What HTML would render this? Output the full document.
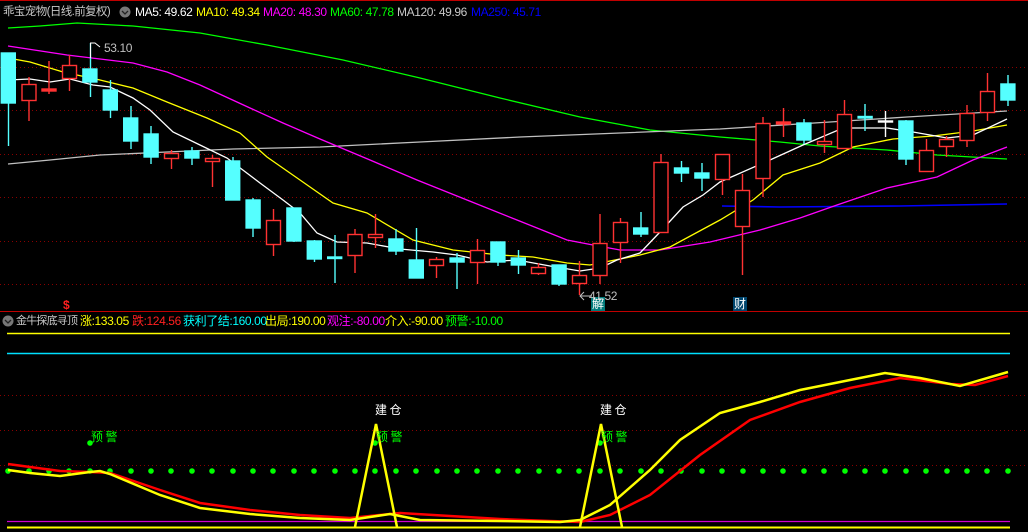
<!DOCTYPE html>
<html><head><meta charset="utf-8"><style>
html,body{margin:0;padding:0;background:#000;width:1028px;height:532px;overflow:hidden}
body{position:relative;font-family:"Liberation Sans","WenQuanYi Zen Hei",sans-serif;font-size:12px}
.t{position:absolute;white-space:nowrap;line-height:14px;letter-spacing:-0.4px}
svg{position:absolute;left:0;top:0}
</style></head><body>
<svg width="1028" height="532" viewBox="0 0 1028 532">
<g stroke="#8a0000" stroke-width="1" stroke-dasharray="1 3">
<line x1="0" x2="1028" y1="67.5" y2="67.5"/><line x1="0" x2="1028" y1="110.5" y2="110.5"/><line x1="0" x2="1028" y1="154.5" y2="154.5"/><line x1="0" x2="1028" y1="197.5" y2="197.5"/><line x1="0" x2="1028" y1="241.5" y2="241.5"/><line x1="0" x2="1028" y1="284.5" y2="284.5"/>
<line x1="0" x2="1028" y1="395.5" y2="395.5"/><line x1="0" x2="1028" y1="430.5" y2="430.5"/><line x1="0" x2="1028" y1="465.5" y2="465.5"/>
</g>
<line x1="0" x2="1028" y1="0.5" y2="0.5" stroke="#c00000"/>
<line x1="0" x2="1028" y1="311.5" y2="311.5" stroke="#c00000"/>
<g fill="none" stroke-width="1.3">
<polyline stroke="#00ff00" points="8,28 40,26 77,23 133,26 200,33 267,45 343,60 420,78 500,98 580,117 650,130 720,137 780,142 820,146 887,150 937,155 1007,159"/>
<polyline stroke="#c0c0c0" points="8,164 50,160 100,155 167,152 233,149 320,147 420,142 520,137 620,133 720,129 830,122 907,117 1007,111"/>
<polyline stroke="#0000ff" stroke-width="1.6" points="722,206 780,207 900,206 1007,204"/>
<polyline stroke="#ff00ff" points="8,46 67,55 133,63 167,72 200,85 250,108 283,123 320,139 370,160 417,180 467,200 517,220 567,240 593,245 620,250 660,250 710,242 760,230 800,218 837,205 887,188 937,177 973,160 1007,147"/>
<polyline stroke="#ffff00" points="8,58 30,62 63,72 100,80 133,88 167,102 207,118 240,133 267,157 300,180 333,203 367,213 413,240 453,250 500,255 533,257 567,263 590,265 640,255 670,247 720,220 753,200 783,175 820,163 853,147 893,139 933,136 973,131 1007,125"/>
<polyline stroke="#ffffff" points="8,80 30,79 50,82 70,79 93,85 110,87 133,98 150,110 173,132 200,145 227,158 260,183 283,200 300,213 317,233 337,242 367,243 400,249 433,252 457,255 487,262 517,260 550,266 580,271 600,268 617,260 640,253 660,232 683,207 703,195 720,182 770,160 803,145 843,128 887,128 913,132 947,138 973,135 1007,119"/>
</g>
<g stroke-width="1.4">
<g stroke="#55ffff" fill="#55ffff">
<line x1="8.5" x2="8.5" y1="53" y2="146"/><rect x="1.3" y="53" width="14" height="50"/>
<line x1="90.5" x2="90.5" y1="43" y2="97"/><rect x="82.9" y="69" width="14" height="13"/>
<line x1="110.5" x2="110.5" y1="80" y2="118"/><rect x="103.3" y="90" width="14" height="20"/>
<line x1="131" x2="131" y1="106" y2="149"/><rect x="123.7" y="118" width="14" height="23"/>
<line x1="151" x2="151" y1="126" y2="164"/><rect x="144.1" y="134" width="14" height="23"/>
<line x1="192" x2="192" y1="147" y2="165"/><rect x="184.9" y="151" width="14" height="7"/>
<line x1="233" x2="233" y1="157" y2="200"/><rect x="225.7" y="161" width="14" height="39"/>
<line x1="253" x2="253" y1="198" y2="237"/><rect x="246.1" y="200" width="14" height="28"/>
<line x1="294" x2="294" y1="208" y2="242"/><rect x="286.9" y="208" width="14" height="33"/>
<line x1="314.5" x2="314.5" y1="240" y2="262"/><rect x="307.3" y="241" width="14" height="18"/>
<line x1="335" x2="335" y1="235" y2="283"/><rect x="327.7" y="257" width="14" height="1.5"/>
<line x1="396" x2="396" y1="229" y2="255"/><rect x="388.9" y="239" width="14" height="12"/>
<line x1="416.5" x2="416.5" y1="228" y2="278"/><rect x="409.3" y="260" width="14" height="18"/>
<line x1="457" x2="457" y1="253" y2="289"/><rect x="450.1" y="258" width="14" height="4"/>
<line x1="498" x2="498" y1="242" y2="266"/><rect x="490.9" y="242" width="14" height="20"/>
<line x1="518.5" x2="518.5" y1="250" y2="274"/><rect x="511.3" y="258" width="14" height="7"/>
<line x1="559" x2="559" y1="265" y2="286"/><rect x="552.1" y="265" width="14" height="19"/>
<line x1="641" x2="641" y1="212" y2="237"/><rect x="633.7" y="228" width="14" height="6"/>
<line x1="681.5" x2="681.5" y1="161" y2="182"/><rect x="674.5" y="168" width="14" height="5"/>
<line x1="702" x2="702" y1="163" y2="191"/><rect x="694.9" y="173" width="14" height="5"/>
<line x1="804" x2="804" y1="119" y2="144"/><rect x="796.9" y="123" width="14" height="17"/>
<line x1="865" x2="865" y1="104" y2="131"/><rect x="858.1" y="116.5" width="14" height="1.5"/>
<line x1="906" x2="906" y1="120" y2="165"/><rect x="898.9" y="121" width="14" height="38"/>
<line x1="1008" x2="1008" y1="75" y2="106"/><rect x="1000.9" y="84" width="14" height="16"/>
</g>
<g stroke="#ffffff" fill="#ffffff"><line x1="885.5" x2="885.5" y1="111" y2="137"/><rect x="878.5" y="121" width="14" height="1"/></g>
<g stroke="#ff3232" fill="#000">
<line x1="29" x2="29" y1="77" y2="121"/><rect x="22" y="84.5" width="14" height="16"/>
<line x1="49" x2="49" y1="61" y2="94"/><rect x="42" y="89" width="14" height="2" fill="#ff3232"/>
<line x1="69.5" x2="69.5" y1="55" y2="91"/><rect x="62.5" y="65.5" width="14" height="13"/>
<line x1="171.5" x2="171.5" y1="150" y2="169"/><rect x="164.5" y="153.5" width="14" height="5"/>
<line x1="212.5" x2="212.5" y1="155" y2="187"/><rect x="205.5" y="158.5" width="14" height="3"/>
<line x1="273.5" x2="273.5" y1="209" y2="256"/><rect x="266.5" y="220.5" width="14" height="24"/>
<line x1="355" x2="355" y1="229" y2="273"/><rect x="348" y="234.5" width="14" height="21"/>
<line x1="375.5" x2="375.5" y1="214" y2="248"/><rect x="368.5" y="234.5" width="14" height="3"/>
<line x1="436.5" x2="436.5" y1="257" y2="278"/><rect x="429.5" y="259.5" width="14" height="6"/>
<line x1="477.5" x2="477.5" y1="239" y2="284"/><rect x="470.5" y="250.5" width="14" height="12"/>
<line x1="538.5" x2="538.5" y1="263" y2="275"/><rect x="531.5" y="267.5" width="14" height="6"/>
<line x1="579.5" x2="579.5" y1="261" y2="295"/><rect x="572.5" y="275.5" width="14" height="8"/>
<line x1="600" x2="600" y1="214" y2="284"/><rect x="593" y="243.5" width="14" height="32"/>
<line x1="620.5" x2="620.5" y1="218" y2="263"/><rect x="613.5" y="222.5" width="14" height="20"/>
<line x1="661" x2="661" y1="154" y2="233"/><rect x="654" y="162.5" width="14" height="70"/>
<line x1="722.5" x2="722.5" y1="154" y2="195"/><rect x="715.5" y="154.5" width="14" height="25"/>
<line x1="742.5" x2="742.5" y1="174" y2="275"/><rect x="735.5" y="190.5" width="14" height="36"/>
<line x1="763" x2="763" y1="117" y2="197"/><rect x="756" y="123.5" width="14" height="55"/>
<line x1="783.5" x2="783.5" y1="108" y2="137"/><rect x="776.5" y="122" width="14" height="2" fill="#ff3232"/>
<line x1="824.5" x2="824.5" y1="120" y2="153"/><rect x="817.5" y="141.5" width="14" height="3"/>
<line x1="844.5" x2="844.5" y1="100" y2="149"/><rect x="837.5" y="114.5" width="14" height="34"/>
<line x1="926.5" x2="926.5" y1="139" y2="172"/><rect x="919.5" y="150.5" width="14" height="21"/>
<line x1="946.5" x2="946.5" y1="136" y2="157"/><rect x="939.5" y="139.5" width="14" height="7"/>
<line x1="967" x2="967" y1="105" y2="147"/><rect x="960" y="113.5" width="14" height="27"/>
<line x1="987.5" x2="987.5" y1="73" y2="121"/><rect x="980.5" y="91.5" width="14" height="21"/>
</g>
</g>
<polyline fill="none" stroke="#fff" points="90.5,58 90.5,43 95,43 100,47"/>
<line x1="580" y1="296" x2="592" y2="296" stroke="#c0c0c0"/>
<polyline fill="none" stroke="#c0c0c0" points="584,292 580,296 584,300"/>
<rect x="591" y="297" width="14" height="14" fill="#007a7a"/>
<rect x="733" y="297" width="14" height="14" fill="#00466e"/>
<line x1="7" x2="1010" y1="333.5" y2="333.5" stroke="#ffff00" stroke-width="1.5"/>
<line x1="7" x2="1010" y1="353.5" y2="353.5" stroke="#00e0ff" stroke-width="1.5"/>
<line x1="7" x2="1010" y1="521.5" y2="521.5" stroke="#d000d0" stroke-width="1.2"/>
<line x1="7" x2="1010" y1="527.5" y2="527.5" stroke="#ffff00" stroke-width="2"/>
<g fill="#00ff00">
<circle cx="8" cy="471" r="2.8"/><circle cx="29" cy="471" r="2.8"/><circle cx="49" cy="471" r="2.8"/><circle cx="69" cy="471" r="2.8"/><circle cx="90" cy="471" r="2.8"/><circle cx="110" cy="471" r="2.8"/><circle cx="131" cy="471" r="2.8"/><circle cx="151" cy="471" r="2.8"/><circle cx="171" cy="471" r="2.8"/><circle cx="192" cy="471" r="2.8"/><circle cx="212" cy="471" r="2.8"/><circle cx="233" cy="471" r="2.8"/><circle cx="253" cy="471" r="2.8"/><circle cx="273" cy="471" r="2.8"/><circle cx="294" cy="471" r="2.8"/><circle cx="314" cy="471" r="2.8"/><circle cx="335" cy="471" r="2.8"/><circle cx="355" cy="471" r="2.8"/><circle cx="375" cy="471" r="2.8"/><circle cx="396" cy="471" r="2.8"/><circle cx="416" cy="471" r="2.8"/><circle cx="437" cy="471" r="2.8"/><circle cx="457" cy="471" r="2.8"/><circle cx="477" cy="471" r="2.8"/><circle cx="498" cy="471" r="2.8"/><circle cx="518" cy="471" r="2.8"/><circle cx="539" cy="471" r="2.8"/><circle cx="559" cy="471" r="2.8"/><circle cx="579" cy="471" r="2.8"/><circle cx="600" cy="471" r="2.8"/><circle cx="620" cy="471" r="2.8"/><circle cx="641" cy="471" r="2.8"/><circle cx="661" cy="471" r="2.8"/><circle cx="681" cy="471" r="2.8"/><circle cx="702" cy="471" r="2.8"/><circle cx="722" cy="471" r="2.8"/><circle cx="743" cy="471" r="2.8"/><circle cx="763" cy="471" r="2.8"/><circle cx="783" cy="471" r="2.8"/><circle cx="804" cy="471" r="2.8"/><circle cx="824" cy="471" r="2.8"/><circle cx="845" cy="471" r="2.8"/><circle cx="865" cy="471" r="2.8"/><circle cx="885" cy="471" r="2.8"/><circle cx="906" cy="471" r="2.8"/><circle cx="926" cy="471" r="2.8"/><circle cx="947" cy="471" r="2.8"/><circle cx="967" cy="471" r="2.8"/><circle cx="987" cy="471" r="2.8"/><circle cx="1008" cy="471" r="2.8"/>
<circle cx="90" cy="443" r="2.8"/><circle cx="375" cy="443" r="2.8"/><circle cx="600" cy="443" r="2.8"/>
</g>
<polyline fill="none" stroke="#ff0000" stroke-width="2.5" points="8,464 30,467 60,471 90,472 110,473 160,490 200,503 250,510 300,515 350,518 400,513 450,516 500,519 550,521 580,522 610,515 650,495 700,455 750,420 800,402 850,388 900,378 950,384 975,385 1008,376"/>
<polyline fill="none" stroke="#ffff00" stroke-width="2.5" points="8,470 30,473 60,476 90,472 100,471 110,474 160,495 200,508 250,514 300,518 350,520 390,514 420,520 500,521 560,522 580,520 610,505 650,470 680,440 720,413 760,402 800,390 850,380 885,373 920,378 960,386 1008,372"/>
<polyline fill="none" stroke="#ffff00" stroke-width="2.5" points="355,527 376,424 397,527"/>
<polyline fill="none" stroke="#ffff00" stroke-width="2.5" points="580,527 601,424 622,527"/>
<circle cx="125" cy="12" r="5.5" fill="#777"/><polyline points="122,11 125,14 128,11" fill="none" stroke="#222" stroke-width="1.3"/>
<circle cx="8" cy="321" r="5.5" fill="#777"/><polyline points="5,320 8,323 11,320" fill="none" stroke="#222" stroke-width="1.3"/>
</svg>
<div class="t" style="left:3px;top:5px;color:#c8c8c8;font-size:11.5px;letter-spacing:-0.6px">乖宝宠物(日线.前复权)</div>
<div class="t" style="left:135px;top:5px;color:#fff">MA5: 49.62</div>
<div class="t" style="left:196px;top:5px;color:#ff0">MA10: 49.34</div>
<div class="t" style="left:263px;top:5px;color:#f0f">MA20: 48.30</div>
<div class="t" style="left:330px;top:5px;color:#0f0">MA60: 47.78</div>
<div class="t" style="left:397px;top:5px;color:#c8c8c8">MA120: 49.96</div>
<div class="t" style="left:471px;top:5px;color:#0000ff">MA250: 45.71</div>
<div class="t" style="left:104px;top:41px;color:#c0c0c0">53.10</div>
<div class="t" style="left:589px;top:289px;color:#c0c0c0">41.52</div>
<div class="t" style="left:592px;top:297px;color:#fff">解</div>
<div class="t" style="left:734px;top:297px;color:#fff">财</div>
<div class="t" style="left:63px;top:298px;color:#ff2020;font-weight:bold">$</div>
<div class="t" style="left:16px;top:314px;color:#c8c8c8;font-size:11px;letter-spacing:-0.8px">金牛探底寻顶</div>
<div class="t" style="left:80px;top:314px;color:#ff0">涨:133.05</div>
<div class="t" style="left:132px;top:314px;color:#ff2020">跌:124.56</div>
<div class="t" style="left:183px;top:314px;color:#0ff">获利了结:160.00</div>
<div class="t" style="left:265px;top:314px;color:#ff0">出局:190.00</div>
<div class="t" style="left:327px;top:314px;color:#f0f">观注:-80.00</div>
<div class="t" style="left:385px;top:314px;color:#ff0">介入:-90.00</div>
<div class="t" style="left:445px;top:314px;color:#0f0">预警:-10.00</div>
<div class="t" style="left:375px;top:403px;color:#fff">建 仓</div>
<div class="t" style="left:600px;top:403px;color:#fff">建 仓</div>
<div class="t" style="left:91px;top:430px;color:#0f0">预 警</div>
<div class="t" style="left:376px;top:430px;color:#0f0">预 警</div>
<div class="t" style="left:601px;top:430px;color:#0f0">预 警</div>
</body></html>
